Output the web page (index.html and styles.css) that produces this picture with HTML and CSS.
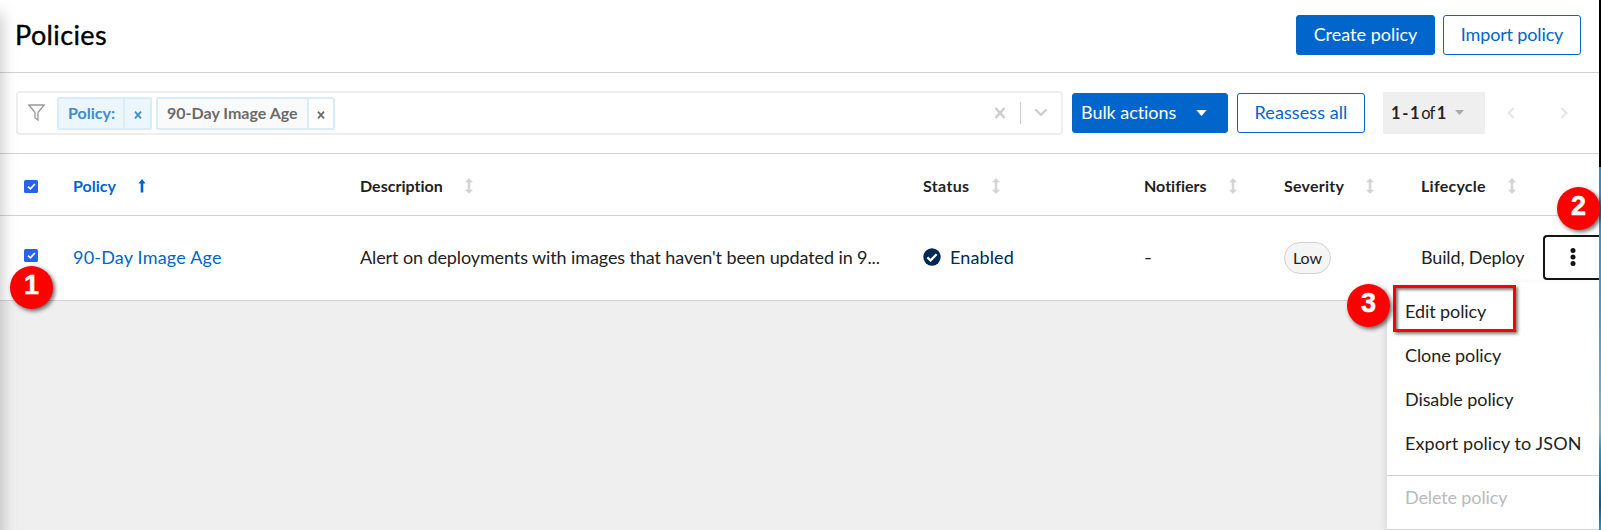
FILE: index.html
```html
<!DOCTYPE html>
<html lang="en">
<head>
<meta charset="utf-8">
<title>Policies</title>
<link rel="stylesheet" href="styles.css">
</head>
<body>
<svg class="defs" width="0" height="0">
  <symbol id="sort" viewBox="0 0 8 16"><path d="M4 0.5 7.400 4H4.900v8h2.500L4 15.500.6 12h2.500V4H.6z" fill="#d2d2d2" stroke="#d2d2d2" stroke-width=".6" stroke-linejoin="round"/></symbol>
  <symbol id="check" viewBox="0 0 14 13"><rect width="14" height="13" rx="1.6" fill="#2563eb"/><path d="M4 6.6 6.4 8.8 10.9 4" fill="none" stroke="#fff" stroke-width="1.7"/></symbol>
</svg>
<div class="page">
  <main class="panel">
    <header class="head">
      <h1 class="title">Policies</h1>
      <button class="btn primary create"><span class="t-create">Create policy</span></button>
      <button class="btn import"><span class="t-import">Import policy</span></button>
    </header>
    <section class="toolbar">
      <div class="search">
        <svg class="funnel" width="17" height="17" viewBox="0 0 17 17"><path d="M.9 1h15.2L10 8.600V16L7 14V8.600z" fill="none" stroke="#999" stroke-width="1.3"/></svg>
        <div class="chip blue"><span class="chip-label"><span>Policy:</span></span><span class="chip-x"><svg width="8" height="8" viewBox="0 0 8 8"><path d="M1 .7 7 7.300M7 .7 1 7.300" stroke="currentColor" stroke-width="1.8"/></svg></span></div>
        <div class="chip gray"><span class="chip-label"><span>90-Day Image Age</span></span><span class="chip-x"><svg width="8" height="8" viewBox="0 0 8 8"><path d="M1 .7 7 7.300M7 .7 1 7.300" stroke="currentColor" stroke-width="1.8"/></svg></span></div>
        <svg class="clear" width="12" height="12" viewBox="0 0 12 12"><path d="M1.500 1 10.500 11M10.500 1 1.500 11" stroke="#ccc" stroke-width="2.500"/></svg>
        <span class="rule"></span>
        <svg class="down" width="14" height="9" viewBox="0 0 14 9"><path d="M1.300 1.500 7 6.800 12.700 1.500" fill="none" stroke="#ccc" stroke-width="2.200"/></svg>
      </div>
      <button class="btn primary bulk"><span class="t-bulk">Bulk actions</span><svg width="11" height="6" viewBox="0 0 11 6"><path d="M.3 0h10.400L5.500 6z" fill="#fff"/></svg></button>
      <button class="btn reassess"><span class="t-reassess">Reassess all</span></button>
      <div class="pager"><span class="t-pager"><b>1 - 1</b> of <b>1</b></span><svg width="9" height="5" viewBox="0 0 9 5"><path d="M0 0h9L4.500 5z" fill="#aaa"/></svg></div>
      <svg class="prev" width="8" height="12" viewBox="0 0 8 12"><path d="M6.700 1 1.600 6l5.100 5" fill="none" stroke="#e6e6e6" stroke-width="2.400"/></svg>
      <svg class="next" width="8" height="12" viewBox="0 0 8 12"><path d="M1.300 1l5.100 5-5.100 5" fill="none" stroke="#e6e6e6" stroke-width="2.400"/></svg>
    </section>
    <div class="row thead">
      <svg class="box" width="14" height="13"><use href="#check"/></svg>
      <div class="cell blue-text"><span>Policy</span><svg width="8" height="14" viewBox="0 0 8 14"><path d="M4 0 7.600 4.500H5.300V13.500H2.700V4.500H.4z" fill="#06c"/></svg></div>
      <div class="cell"><span class="t-h2">Description</span><svg width="8" height="16"><use href="#sort"/></svg></div>
      <div class="cell"><span class="t-h3">Status</span><svg width="8" height="16"><use href="#sort"/></svg></div>
      <div class="cell"><span class="t-h4">Notifiers</span><svg width="8" height="16"><use href="#sort"/></svg></div>
      <div class="cell"><span class="t-h5">Severity</span><svg width="8" height="16"><use href="#sort"/></svg></div>
      <div class="cell"><span class="t-h6">Lifecycle</span><svg width="8" height="16"><use href="#sort"/></svg></div>
    </div>
    <div class="row tbody">
      <svg class="box" width="14" height="13"><use href="#check"/></svg>
      <div class="blue-text"><span class="t-name">90-Day Image Age</span></div>
      <div><span class="t-desc">Alert on deployments with images that haven't been updated in 9...</span></div>
      <div class="status"><svg width="18" height="18" viewBox="0 0 18 18"><circle cx="9" cy="9" r="8.700" fill="#002952"/><path d="M4.400 9.400 7.600 12.400 13.600 6.300" fill="none" stroke="#fff" stroke-width="2.300"/></svg><span class="t-enabled">Enabled</span></div>
      <div><span class="dash">-</span></div>
      <div><span class="pill">Low</span></div>
      <div><span class="t-life">Build, Deploy</span></div>
      <button class="kebab"><svg width="6" height="18" viewBox="0 0 6 18"><g fill="#151515"><circle cx="3" cy="2.500" r="2.500"/><circle cx="3" cy="9" r="2.500"/><circle cx="3" cy="15.500" r="2.500"/></g></svg></button>
    </div>
  </main>
  <div class="edge-shadow"></div>
  <nav class="menu">
    <a><span class="t-m1">Edit policy</span></a>
    <a><span class="t-m1">Clone policy</span></a>
    <a><span class="t-m1">Disable policy</span></a>
    <a><span class="t-m4">Export policy to JSON</span></a>
    <a class="off"><span class="t-m5">Delete policy</span></a>
  </nav>
  <div class="desktop"></div>
  <div class="highlight"></div>
  <div class="mark m1">1</div>
  <div class="mark m2">2</div>
  <div class="mark m3">3</div>
</div>
</body>
</html>
```
FILE: styles.css
```css
* { box-sizing: border-box; }
body { margin: 0; background: #efefef; font: 400 18px/24px Lato, "Open Sans", sans-serif; font-variant-ligatures: none; color: #222; overflow: hidden; }
svg { display: block; flex: none; }
.defs { position: absolute; }
button { font: inherit; margin: 0; padding: 0; }
span { white-space: nowrap; }
.page { position: relative; width: 1601px; height: 530px; overflow: hidden; }
.panel { width: 1599px; height: 301px; background: #fff; }

.head { display: flex; height: 73px; padding: 15px 18px 0 15px; border-bottom: 1px solid #d2d2d2; }
.title { margin: 0; flex: 1; font-weight: 400; font-size: 27px; line-height: 40px; letter-spacing: .38px; color: #000; -webkit-text-stroke: .35px #000; }
.btn { display: flex; align-items: center; justify-content: center; height: 40px; border: 1px solid #06c; border-radius: 3px; background: #fff; color: #06c; }
.btn span { padding-bottom: 2px; }
.primary { background: #06c; color: #fff; }
.create { width: 139px; margin-right: 8px; }
.import { width: 138px; }
.t-import { letter-spacing: -.15px; }

.toolbar { display: flex; align-items: center; height: 81px; padding: 0 0 1px 16px; border-bottom: 1px solid #d2d2d2; }
.search { display: flex; align-items: center; width: 1047px; height: 44px; margin-right: 9px; padding-left: 10px; border: 2px solid #eee; border-radius: 4px; }
.funnel { margin-right: 12px; }
.chip { display: flex; height: 33px; margin: 2px 4px 0 0; border: 2px solid #d8ecfa; border-radius: 2px; background: #fafafa; color: #6b6b6b; font-size: 16px; font-weight: 700; }
.chip-label { display: flex; align-items: center; width: 149px; padding: 0 0 2px 9px; }
.blue .chip-label { width: 64px; }
.chip-x { display: flex; align-items: center; justify-content: center; width: 26px; border-left: 2px solid #d8ecfa; background: #fff; }
.chip-x svg { margin-top: 2px; }
.blue { background: #ebf6ff; color: #3e8ccb; }
.blue .chip-x { width: 27px; background: #ebf6ff; }
.clear { margin-left: auto; }
.rule { width: 1px; height: 22px; margin: 0 13px 0 14px; background: #ccc; }
.down { margin-right: 13px; }
.bulk { width: 156px; margin-right: 9px; padding: 0 20px 0 8px; justify-content: space-between; }
.t-bulk { letter-spacing: -.05px; }
.reassess { width: 128px; margin-right: 18px; }
.t-reassess { letter-spacing: .08px; }
.pager { display: flex; align-items: center; justify-content: space-between; width: 102px; height: 42px; padding: 0 21px 0 8px; margin-right: 22px; background: #efefef; font-size: 16.5px; }
.t-pager { letter-spacing: -1.1px; word-spacing: -.2px; }
.prev { margin-right: 45px; }

.row { display: grid; grid-template-columns: 49px 287px 563px 221px 140px 137px 122px 56px; padding-left: 24px; align-items: center; border-bottom: 1px solid #d2d2d2; }
.thead { height: 62px; padding-top: 2px; font-size: 16px; font-weight: 700; }
.thead .box { margin-top: 1px; }
.cell { display: flex; align-items: center; gap: 22px; }
.t-h2, .t-h4 { letter-spacing: .02px; }
.t-h3 { letter-spacing: .35px; }
.t-h5, .t-h6 { letter-spacing: .25px; }
.blue-text { color: #06c; }
.tbody { height: 85px; padding-bottom: 2px; }
.tbody .box { margin-top: -4px; }
.t-name { letter-spacing: .2px; }
.t-desc { letter-spacing: -.105px; }
.t-life { letter-spacing: -.15px; }
.t-enabled { letter-spacing: .12px; }
.status { display: flex; align-items: center; gap: 9px; color: #002952; }
.dash { display: inline-block; transform: scaleX(1.2); transform-origin: left; }
.pill { display: flex; align-items: center; justify-content: center; width: 47px; height: 32px; margin: 2px 0 0; padding-bottom: 1px; border: 1px solid #d2d2d2; border-radius: 16px; background: #f5f5f5; font-size: 16px; }
.kebab { display: flex; align-items: center; height: 45px; padding-left: 25px; border: 2px solid #151515; border-right: 0; border-radius: 4px 0 0 4px; background: #fff; }

.edge-shadow { position: absolute; left: -12px; top: 14px; width: 12px; height: 530px; box-shadow: 0 0 16px 1px rgba(3,3,3,.25); }
.menu { position: absolute; left: 1387px; top: 282px; width: 212px; height: 248px; padding-top: 7px; background: #fff; border-bottom: 1px solid #d2d2d2; box-shadow: 0 4px 8px rgba(3,3,3,.14); }
.menu a { display: flex; align-items: center; height: 44px; padding-left: 18px; }
.menu .off { height: 43px; margin-top: 10px; border-top: 1px solid #d2d2d2; color: #b8bbbe; }
.t-m1 { letter-spacing: -.09px; }
.t-m4 { letter-spacing: .1px; }
.t-m5 { letter-spacing: -.13px; }
.desktop { position: absolute; left: 1599px; top: 0; width: 2px; height: 530px; background: linear-gradient(#000 0 167px, #3489bd 167px, #4698c9 300px, #7fb0cc 430px, #2398c7 450px, #0878ae 480px, #075b91 505px, #2398c7); }
.highlight { position: absolute; left: 1393px; top: 285px; width: 123px; height: 47px; border: 3px solid #f00; box-shadow: 2px 2px 3px rgba(0,0,0,.5), inset 2px 2px 3px rgba(0,0,0,.5); }
.mark { position: absolute; width: 43px; height: 43px; border-radius: 50%; background: #f00; box-shadow: 2px 2px 4px rgba(0,0,0,.6); color: #fff; font: 700 27px/39px "Liberation Sans", sans-serif; text-align: center; -webkit-text-stroke: .5px #fff; }
.m1 { left: 10px; top: 266px; }
.m2 { left: 1557px; top: 187px; }
.m3 { left: 1347px; top: 284px; }
```
